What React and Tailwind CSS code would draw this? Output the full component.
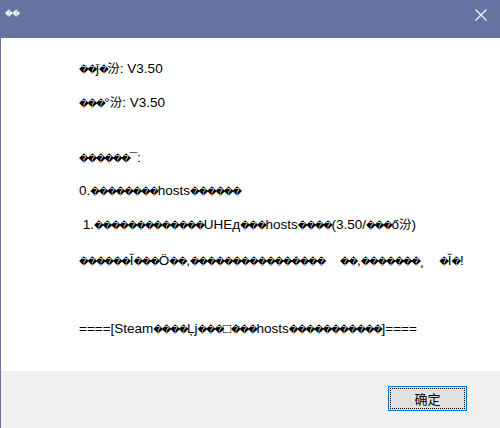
function M({ t }) {
  return t.split(/([\uFFFD\u0308]+|汾)/).map((s, i) =>
    /[\uFFFD]/.test(s) ? (
      <span key={i} className="text-[9.5px] leading-none tracking-[-1.3px]">{s}</span>
    ) : s === '汾' ? (
      <span key={i} className="text-[12.5px] leading-none">{s}</span>
    ) : (
      <span key={i}>{s}</span>
    )
  );
}

export default function App() {
  const font = { fontFamily: '"Liberation Sans", "DejaVu Sans", "Noto Sans CJK SC", sans-serif' };
  return (
    <div className="w-[500px] h-[428px] flex flex-col bg-white overflow-hidden" style={font}>
      <div className="h-[38px] bg-[#6673a0] flex items-start justify-between pl-[5px] pr-[13px] pt-[9px] shrink-0">
        <span className="text-white text-[7.5px] leading-none mt-[1px] tracking-[-0.5px]">��</span>
        <svg width="12" height="12" viewBox="0 0 12 12">
          <path d="M0.5 0.5 L11.5 11.5 M11.5 0.5 L0.5 11.5" stroke="white" strokeWidth="1.1" />
        </svg>
      </div>
      <div className="flex-1 flex flex-col border-l border-[#6673a0]">
        <div className="h-[333px] bg-white pl-[78px] pt-[23px] text-[13.5px] leading-[16px] text-black whitespace-pre">
          <div><M t="��ǰ�汾: V3.50" /></div>
          <div className="mt-[18px]"><M t="���°汾: V3.50" /></div>
          <div className="mt-[39px]"><M t="������¯:" /></div>
          <div className="mt-[17px]"><M t="0.��������hosts������" /></div>
          <div className="mt-[18px]"><M t=" 1.�������������UHEд���hosts����(3.50/���ő汾)" /></div>
          <div className="mt-[20px]"><M t="������Ĭ���Ö��,����������������    ��,�������¸    �Ĭ�!" /></div>
          <div className="mt-[52px]"><M t="====[Steam����Ļj���□�̈��hosts�����������]====" /></div>
        </div>
        <div className="flex-1 bg-[#f0f0f0] flex justify-end items-start pt-[15px] pr-[33px]">
          <button className="w-[79px] h-[25px] bg-[#e1e1e1] border border-[#0078d7] p-[1px]">
            <div className="w-full h-full border border-dotted border-black flex items-center justify-center text-[13px] text-black" style={{ fontFamily: '"Noto Sans CJK SC", sans-serif' }}>
              确定
            </div>
          </button>
        </div>
      </div>
    </div>
  );
}
